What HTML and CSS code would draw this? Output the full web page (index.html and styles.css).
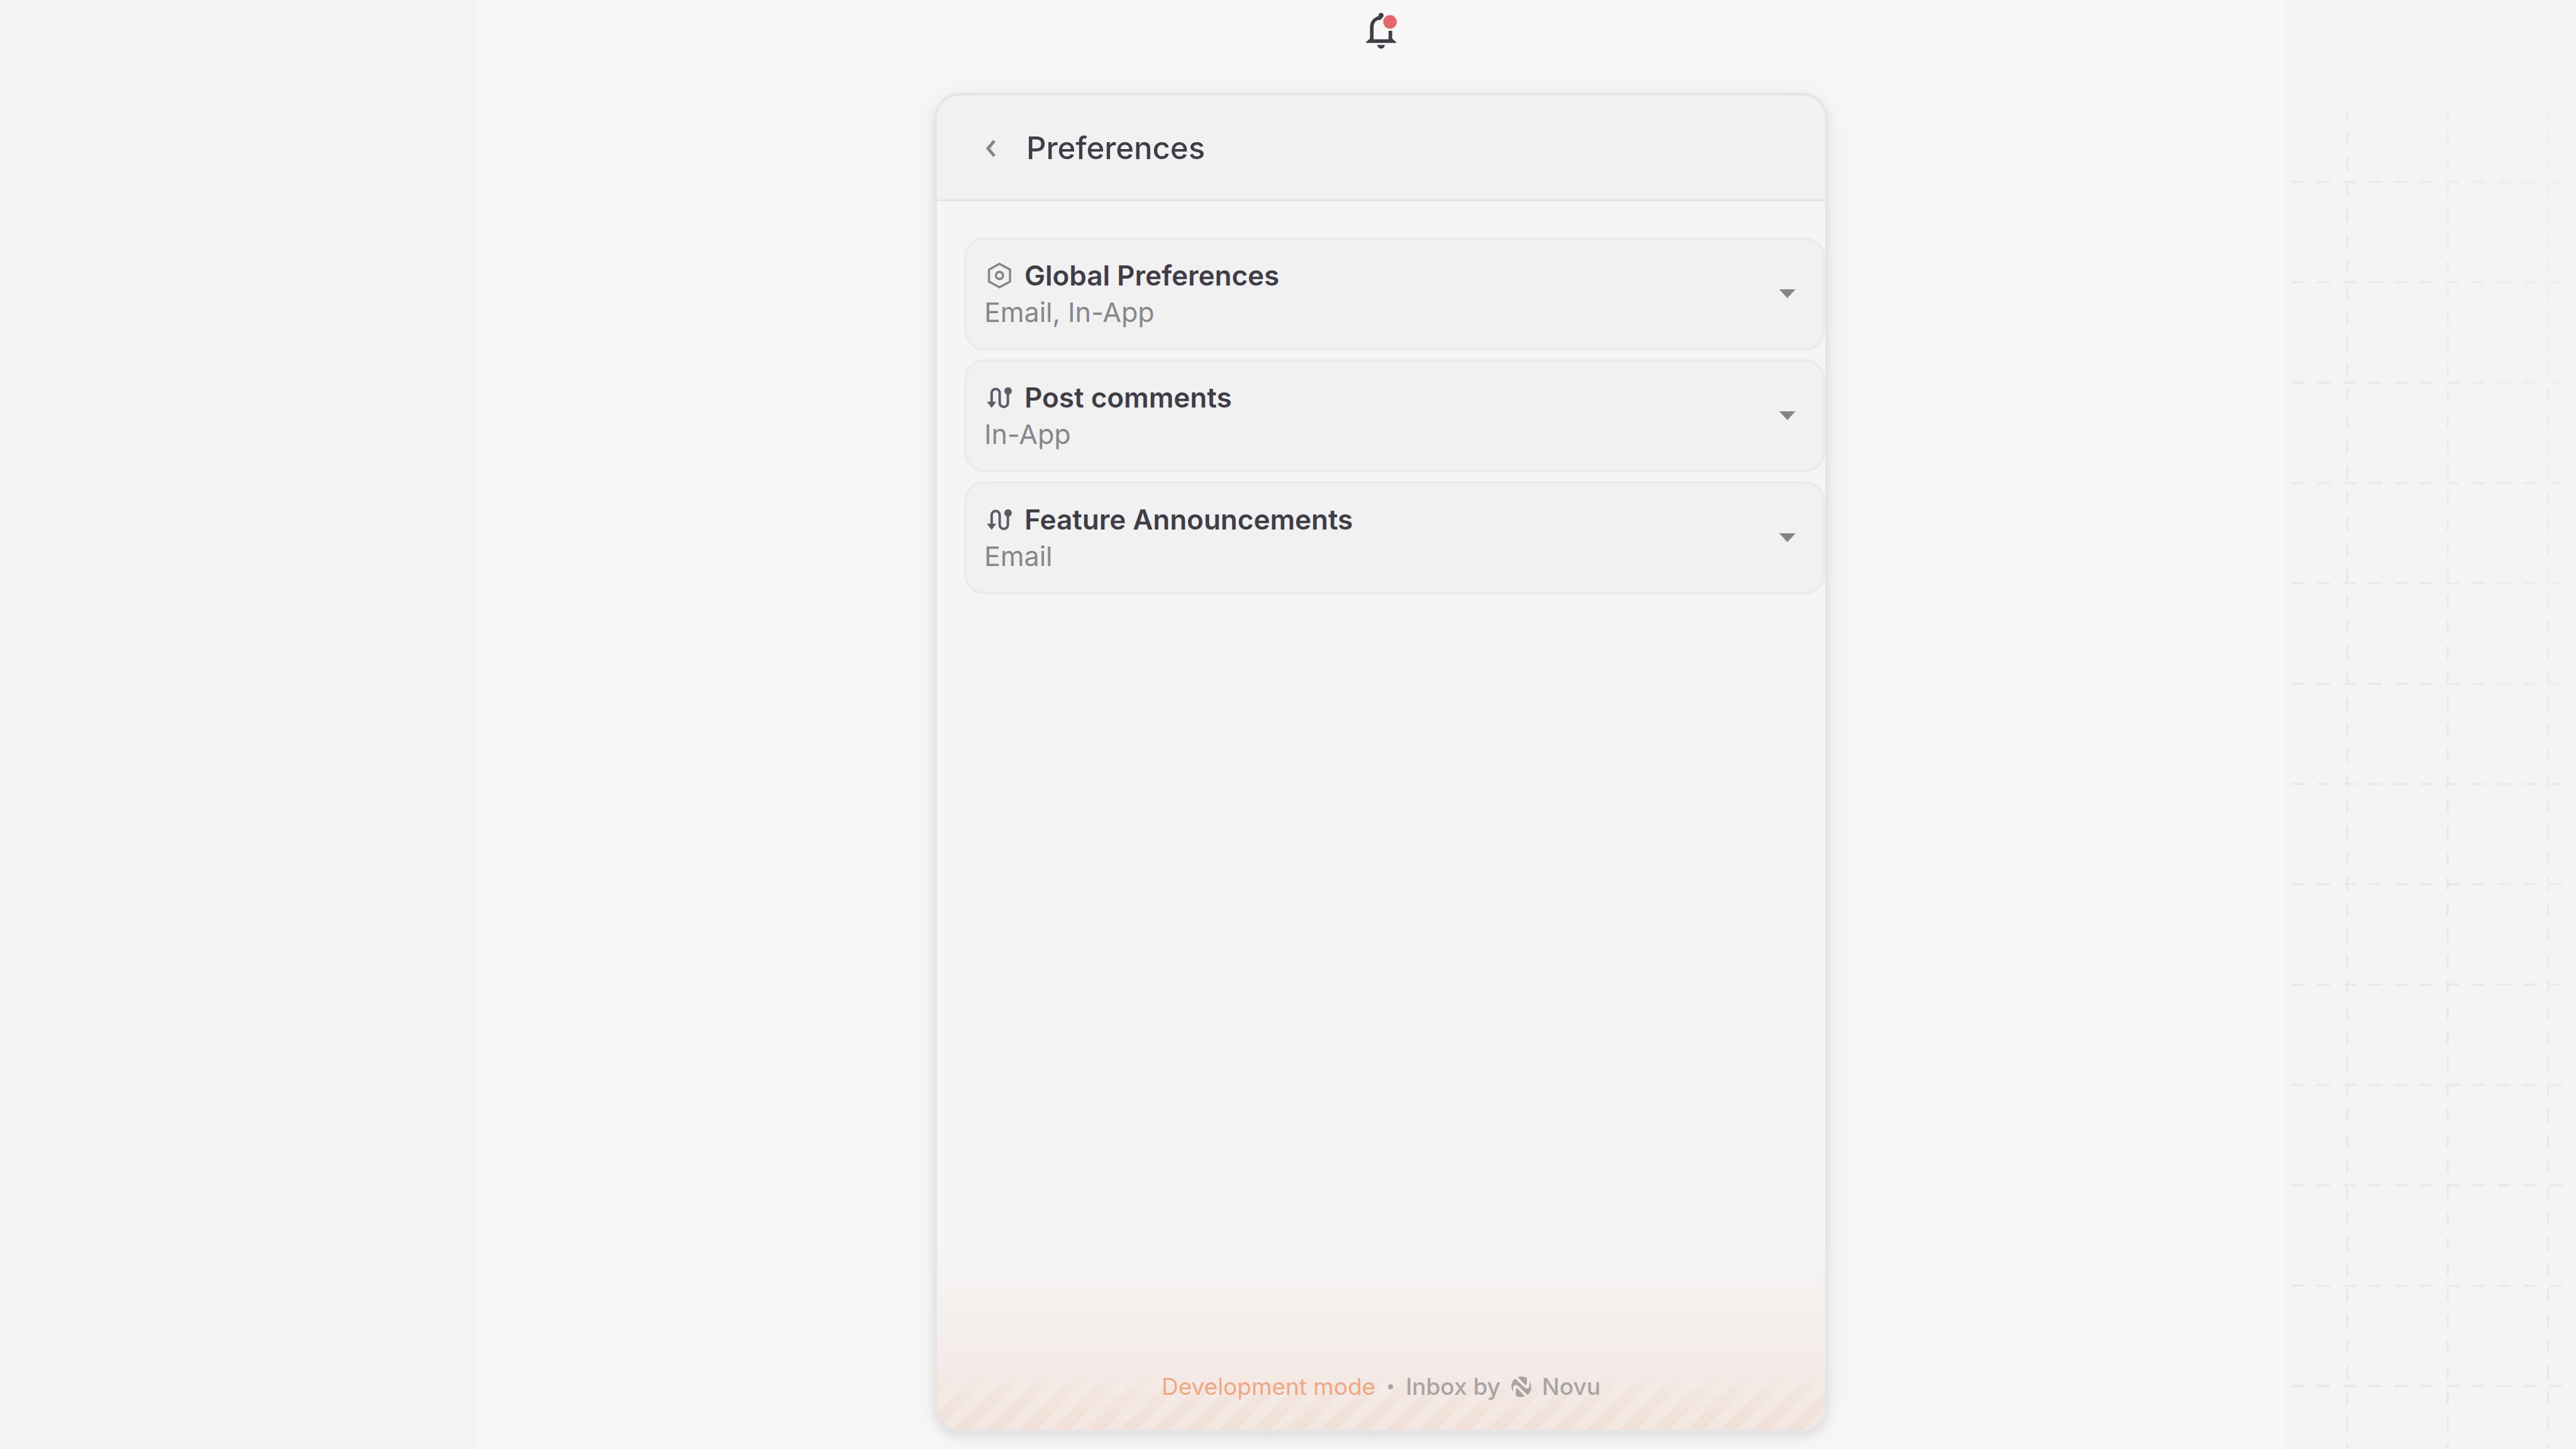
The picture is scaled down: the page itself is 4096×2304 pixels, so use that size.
FILE: index.html
```html
<!DOCTYPE html>
<html lang="en">
<head>
<meta charset="utf-8">
<meta name="viewport" content="width=device-width, initial-scale=1">
<title>Inbox preferences</title>
<link rel="stylesheet" href="styles.css">
</head>
<body>
<div class="page">
  <div class="side"></div>
  <main class="stage">
    <button class="bell" type="button" aria-label="Notifications">
      <svg viewBox="187 62 190 218" aria-hidden="true">
        <path d="M230 228V152C230 122 248 102 276 97" fill="none" stroke="#403d47" stroke-width="20"/>
        <circle cx="282" cy="85" r="14" fill="#403d47"/>
        <path d="M268 92L288 98Q284 112 268 111Z" fill="#403d47"/>
        <path d="M324 171H344V214L367 235V239H197V235L220 214L240 219H324Z" fill="#403d47"/>
        <path d="M261 250H303C301 262 293 271 282 271S263 262 261 250Z" fill="#403d47"/>
        <circle cx="332" cy="121" r="38" fill="#e5666b"/>
      </svg>
    </button>

    <section class="inbox" aria-labelledby="inbox-title">
      <header class="inbox-header">
        <button class="back" type="button" aria-label="Back">
          <svg viewBox="0 0 32 40" aria-hidden="true"><path d="M21 8L11 20L21 32" fill="none" stroke="#858589" stroke-width="5"/></svg>
        </button>
        <h1 class="inbox-title" id="inbox-title">Preferences</h1>
      </header>

      <div class="list">
        <button class="item" type="button" aria-expanded="false">
          <span class="item-text">
            <span class="item-name">
              <svg class="item-icon" viewBox="56 59 144 148" aria-hidden="true">
                <path d="M128.500 68L188 100V167L128.500 199L70 167V100Z" fill="none" stroke="#858589" stroke-width="12"/>
                <circle cx="129" cy="133" r="20" fill="none" stroke="#858589" stroke-width="13"/>
              </svg>
              Global Preferences
            </span>
            <span class="item-channels">Email, In-App</span>
          </span>
          <svg class="caret" viewBox="0 0 26 14" aria-hidden="true"><path d="M0 0H26L13 14Z" fill="#858589"/></svg>
        </button>

        <button class="item" type="button" aria-expanded="false">
          <span class="item-text">
            <span class="item-name">
              <svg class="item-icon" viewBox="54 734 144 148" aria-hidden="true">
                <path d="M83 836V783A22.500 22.500 0 0 1 128 783V838A23 23 0 0 0 174 838V775" fill="none" stroke="#5e5b66" stroke-width="14"/>
                <path d="M56 832H109L83 866Z" fill="#5e5b66"/>
                <circle cx="175" cy="772" r="21" fill="#5e5b66"/>
              </svg>
              Post comments
            </span>
            <span class="item-channels">In-App</span>
          </span>
          <svg class="caret" viewBox="0 0 26 14" aria-hidden="true"><path d="M0 0H26L13 14Z" fill="#858589"/></svg>
        </button>

        <button class="item" type="button" aria-expanded="false">
          <span class="item-text">
            <span class="item-name">
              <svg class="item-icon" viewBox="54 734 144 148" aria-hidden="true">
                <path d="M83 836V783A22.500 22.500 0 0 1 128 783V838A23 23 0 0 0 174 838V775" fill="none" stroke="#5e5b66" stroke-width="14"/>
                <path d="M56 832H109L83 866Z" fill="#5e5b66"/>
                <circle cx="175" cy="772" r="21" fill="#5e5b66"/>
              </svg>
              Feature Announcements
            </span>
            <span class="item-channels">Email</span>
          </span>
          <svg class="caret" viewBox="0 0 26 14" aria-hidden="true"><path d="M0 0H26L13 14Z" fill="#858589"/></svg>
        </button>
      </div>

      <footer class="inbox-footer">
        <span class="mode">Development mode</span>
        <span class="dot"></span>
        <a class="brand" href="#">
          Inbox by
          <svg class="logo" viewBox="90 74 120 120" aria-hidden="true">
            <path d="M131 80C145 74 165 75 181 84V116C181 124 174 127 169 122Z"/>
            <path d="M169 188C155 194 135 193 119 184V152C119 144 126 141 131 146Z"/>
            <path d="M115 88L170 140C182 150 196 143 196 126V107C212 130 208 160 185 180L130 128C118 118 104 125 104 142V161C88 138 92 108 115 88Z"/>
          </svg>
          Novu
        </a>
      </footer>
    </section>
  </main>
  <div class="side">
    <svg class="grid" viewBox="0 0 540 2700" preserveAspectRatio="xMinYMin slice" aria-hidden="true">
      <defs>
        <pattern id="rows" x="10" y="150" width="48" height="186.880" patternUnits="userSpaceOnUse">
          <rect width="24" height="4" fill="#e7e7e7"/>
        </pattern>
        <pattern id="cols" x="112" y="197.700" width="187" height="47.890" patternUnits="userSpaceOnUse">
          <rect width="4" height="24" fill="#e7e7e7"/>
        </pattern>
        <linearGradient id="fade" x1="1" y1="0" x2="0" y2="1">
          <stop offset="0" stop-color="#fff" stop-opacity="0.300"/>
          <stop offset="0.500" stop-color="#fff" stop-opacity="0.900"/>
          <stop offset="1" stop-color="#fff"/>
        </linearGradient>
        <mask id="fade-mask" maskUnits="userSpaceOnUse" x="0" y="0" width="540" height="2700">
          <rect width="540" height="2700" fill="url(#fade)"/>
        </mask>
      </defs>
      <g mask="url(#fade-mask)">
        <rect x="10" y="210" width="530" height="2490" fill="url(#rows)"/>
        <rect x="10" y="210" width="530" height="2490" fill="url(#cols)"/>
      </g>
    </svg>
  </div>
</div>
</body>
</html>
```
FILE: styles.css
```css
* {
  box-sizing: border-box;
}

body {
  margin: 0;
  background: #f4f4f4;
  color: #403d47;
  font-family: Inter, "Liberation Sans", sans-serif;
}

button {
  margin: 0;
  padding: 0;
  border: 0;
  background: none;
  color: inherit;
  font: inherit;
  text-align: left;
  cursor: pointer;
}

svg {
  display: block;
  flex: none;
}

.page {
  display: grid;
  grid-template-columns: 761fr 2874fr 461fr;
  min-height: 100vh;
}

.side {
  position: relative;
  overflow: hidden;
}

.grid {
  position: absolute;
  inset: 0;
  width: 100%;
  height: 100%;
}

.stage {
  display: flex;
  flex-direction: column;
  align-items: center;
  gap: 68px;
  padding: 18px 4px 27px 0;
  background: #f7f7f7;
}

.bell {
  width: 54px;
  height: 62px;
}

.inbox {
  display: flex;
  flex: 1;
  flex-direction: column;
  width: 100%;
  max-width: 1420px;
  overflow: hidden;
  border: 4px solid #e5e5e5;
  border-radius: 40px;
  background: #f5f5f5;
  box-shadow: 0 6px 16px rgba(0, 0, 0, 0.08), 0 6px 48px rgba(0, 0, 0, 0.06);
}

.inbox-header {
  display: flex;
  align-items: center;
  gap: 40px;
  height: 168px;
  padding: 2px 70px 0;
  border-bottom: 3px solid #e4e4e4;
  background: #f1f1f1;
}

.back {
  width: 32px;
  height: 40px;
}

.inbox-title {
  margin: 0;
  font-size: 49px;
  font-weight: 500;
  line-height: 64px;
}

.list {
  display: flex;
  flex: 1;
  flex-direction: column;
  gap: 14px;
  padding: 57px 0 57px 43px;
}

.item {
  display: flex;
  align-items: center;
  justify-content: space-between;
  padding: 28px 43px 28px 28px;
  border: 4px solid #ebebeb;
  border-radius: 32px;
  background: #f1f1f1;
}

.item-text {
  display: flex;
  flex-direction: column;
}

.item-name {
  display: flex;
  align-items: center;
  gap: 16px;
  font-size: 44px;
  font-weight: 600;
  line-height: 58px;
}

.item-icon {
  width: 48px;
  height: 42px;
}

.item-channels {
  color: #87878b;
  font-size: 43px;
  line-height: 58px;
}

.caret {
  width: 26px;
  height: 14px;
}

.inbox-footer {
  position: relative;
  display: flex;
  align-items: center;
  justify-content: center;
  gap: 20px;
  padding: 206px 0 44px;
  background: linear-gradient(rgba(224, 104, 54, 0), rgba(224, 104, 54, 0.1));
  font-size: 37px;
  line-height: 48px;
}

/* Diagonal stripes that fade in towards the bottom edge */
.inbox-footer::before {
  content: "";
  position: absolute;
  inset: auto 0 0;
  height: 100px;
  background: linear-gradient(135deg, rgba(230, 142, 75, 0.08) 25%, transparent 25% 50%, rgba(230, 142, 75, 0.08) 50% 75%, transparent 75%) 26px 100% / 53px 53px;
  -webkit-mask-image: linear-gradient(transparent, #000);
  mask-image: linear-gradient(transparent, #000);
}

.mode {
  color: #f0a882;
}

.dot {
  width: 8px;
  height: 8px;
  border-radius: 50%;
  background: #a8a4a4;
}

.brand {
  display: flex;
  align-items: center;
  gap: 16px;
  color: #a8a4a4;
  font-weight: 500;
  text-decoration: none;
}

.logo {
  width: 34px;
  height: 34px;
  fill: currentColor;
}
```
